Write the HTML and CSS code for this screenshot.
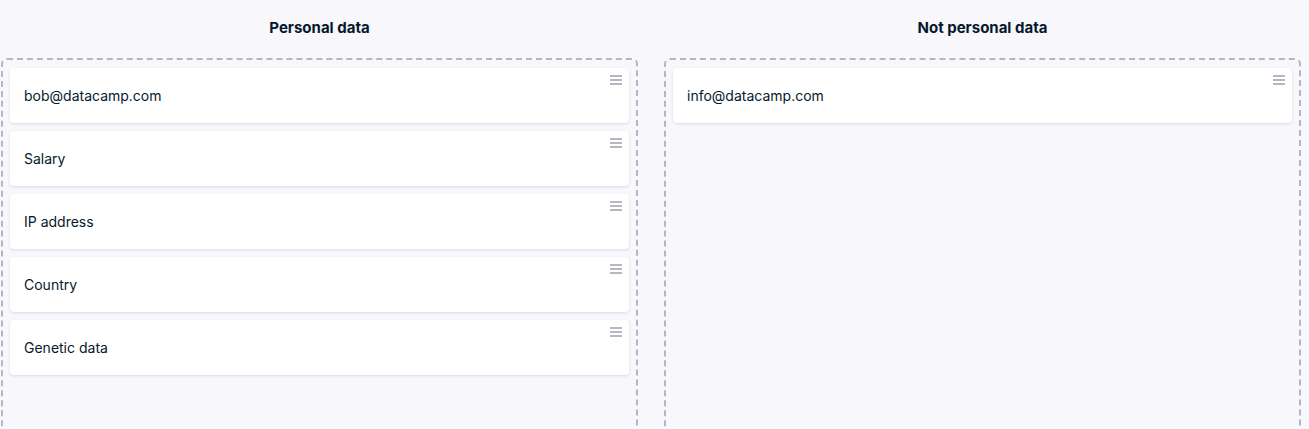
FILE: index.html
```html
<!DOCTYPE html>
<html lang="en">
<head>
<meta charset="utf-8">
<title>Personal data</title>
<link rel="stylesheet" href="styles.css">
</head>
<body>
<div class="board">
  <section class="column">
    <h2 class="column-title">Personal data</h2>
    <div class="dropzone">
      <div class="card"><span class="card-text">bob@datacamp.com</span><span class="handle"><i></i><i></i><i></i></span></div>
      <div class="card"><span class="card-text">Salary</span><span class="handle"><i></i><i></i><i></i></span></div>
      <div class="card"><span class="card-text">IP address</span><span class="handle"><i></i><i></i><i></i></span></div>
      <div class="card"><span class="card-text">Country</span><span class="handle"><i></i><i></i><i></i></span></div>
      <div class="card"><span class="card-text">Genetic data</span><span class="handle"><i></i><i></i><i></i></span></div>
    </div>
  </section>
  <section class="column">
    <h2 class="column-title">Not personal data</h2>
    <div class="dropzone">
      <div class="card"><span class="card-text">info@datacamp.com</span><span class="handle"><i></i><i></i><i></i></span></div>
    </div>
  </section>
</div>
</body>
</html>
```
FILE: styles.css
```css
html, body {
  margin: 0;
  background: #f7f7fc;
  overflow: hidden;
}
body {
  font-family: Inter, "Noto Sans", "Liberation Sans", sans-serif;
  color: #05192d;
}
.board {
  display: grid;
  grid-template-columns: 1fr 1fr;
  column-gap: 26px;
  padding: 0 8px 0 1px;
}
.column {
  display: flex;
  flex-direction: column;
  min-width: 0;
}
.column-title {
  margin: 0;
  padding: 18px 0 20px;
  font-size: 15px;
  line-height: 20px;
  font-weight: 700;
  text-align: center;
}
.dropzone {
  border: 2px dashed #b4b7c1;
  border-radius: 6px;
  padding: 8px 7px;
  display: flex;
  flex-direction: column;
  gap: 8px;
  min-height: 400px;
}
.card {
  position: relative;
  height: 55px;
  background: #fff;
  border-radius: 4px;
  box-shadow: 0 1px 3px rgba(5, 25, 45, 0.12);
  display: flex;
  align-items: center;
  padding: 0 14px;
  box-sizing: border-box;
}
.card-text {
  font-size: 14px;
}
.handle {
  position: absolute;
  top: 7px;
  right: 7px;
  width: 12px;
  display: flex;
  flex-direction: column;
  gap: 2px;
}
.handle i {
  display: block;
  height: 2px;
  background: #b4b7c1;
}
```
